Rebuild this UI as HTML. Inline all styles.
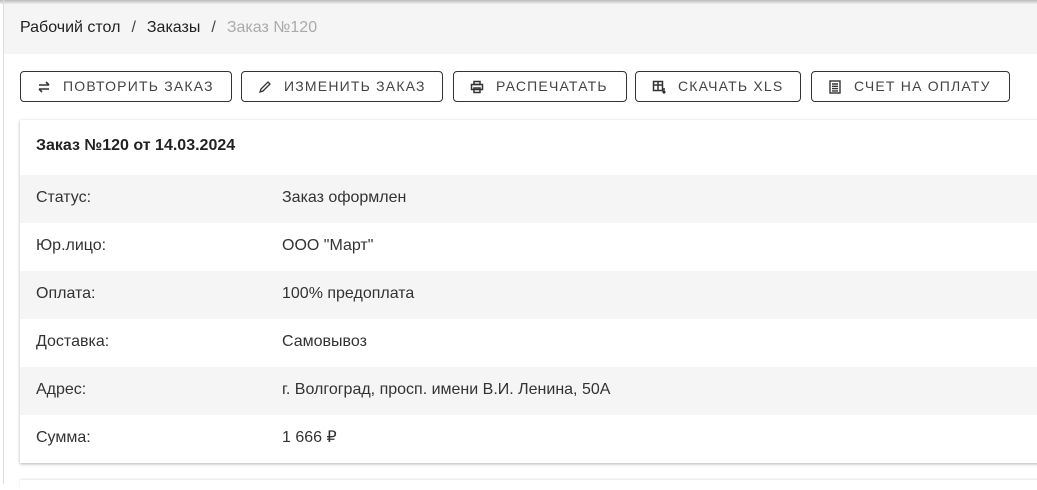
<!DOCTYPE html>
<html><head><meta charset="utf-8"><style>
*{box-sizing:border-box;margin:0;padding:0}
body{width:1037px;height:484px;overflow:hidden;background:#fff;font-family:"Liberation Sans",sans-serif;position:relative;color:#222}
.lb{position:absolute;left:3px;top:0;width:1px;height:484px;background:#ddd}
.top{position:absolute;left:0;top:0;width:1037px;height:4px;background:linear-gradient(#bbb,#eee)}
.bc{position:absolute;left:4px;top:4px;width:1033px;height:50px;background:#f5f5f5;font-size:16px;line-height:47px;padding-left:16px;color:#222}
.bc .s{margin:0 11px;color:#444}.bc .g{color:#aaa}
.btn{position:absolute;top:71px;height:31px;border:1px solid #333;border-radius:4px;font-size:14px;letter-spacing:1.2px;color:#444;line-height:29px;display:flex;align-items:center;padding-left:16px}
.btn svg{margin-right:12px}
.card{position:absolute;left:20px;top:120px;width:1030px;height:343px;background:#fff;box-shadow:0 1px 3px rgba(0,0,0,.3)}
.h{height:55px;line-height:52px;padding-left:16px;font-weight:bold;font-size:16px;color:#222}
.r{height:48px;line-height:46px;font-size:16px;color:#333;position:relative;padding-left:16px}
.r span{position:absolute;left:262px}
.c2{position:absolute;left:20px;top:480px;width:1030px;height:10px;background:#fff;box-shadow:0 -1px 2px rgba(0,0,0,.1)}
</style></head><body>
<div class="top"></div><div class="lb"></div>
<div class="bc">Рабочий стол<span class="s">/</span>Заказы<span class="s">/</span><span class="g">Заказ №120</span></div>
<div class="btn" style="left:20px;width:212px"><svg width="14" height="14" viewBox="0 0 14 14" fill="none" stroke="#333" stroke-width="1.6"><path d="M2 5h10M9 2l3 3M12 9H2M5 12l-3-3"/></svg>ПОВТОРИТЬ ЗАКАЗ</div>
<div class="btn" style="left:241px;width:202px"><svg width="14" height="14" viewBox="0 0 14 14" fill="none" stroke="#333" stroke-width="1.3"><path d="M2 12l1-3 7-7 2 2-7 7z"/></svg>ИЗМЕНИТЬ ЗАКАЗ</div>
<div class="btn" style="left:453px;width:174px"><svg width="14" height="14" viewBox="0 0 14 14" fill="none" stroke="#333" stroke-width="1.5"><rect x="4" y="1.5" width="6" height="3"/><rect x="1.5" y="4.5" width="11" height="5"/><rect x="4" y="8" width="6" height="4.5"/></svg>РАСПЕЧАТАТЬ</div>
<div class="btn" style="left:635px;width:166px"><svg width="14" height="14" viewBox="0 0 14 14" fill="none" stroke="#333" stroke-width="1.5"><rect x="1.5" y="1.5" width="9" height="9"/><path d="M1.5 5h9M6 1.5v9M12 8v5M10.5 11.5l1.5 1.5 1.5-1.5"/></svg>СКАЧАТЬ XLS</div>
<div class="btn" style="left:811px;width:199px"><svg width="14" height="14" viewBox="0 0 14 14" fill="none" stroke="#333" stroke-width="1.4"><rect x="2" y="1" width="10" height="12"/><path d="M4 4h6M4 6.3h6M4 8.6h6M4 10.9h6"/></svg>СЧЕТ НА ОПЛАТУ</div>
<div class="card">
<div class="h">Заказ №120 от 14.03.2024</div>
<div>
<div class="r" style="background:#f5f5f5">Статус:<span>Заказ оформлен</span></div>
<div class="r" style="background:#fff">Юр.лицо:<span>ООО "Март"</span></div>
<div class="r" style="background:#f5f5f5">Оплата:<span>100% предоплата</span></div>
<div class="r" style="background:#fff">Доставка:<span>Самовывоз</span></div>
<div class="r" style="background:#f5f5f5">Адрес:<span>г. Волгоград, просп. имени В.И. Ленина, 50А</span></div>
<div class="r" style="background:#fff">Сумма:<span>1 666 ₽</span></div>
</div></div>
<div class="c2"></div>
</body></html>
